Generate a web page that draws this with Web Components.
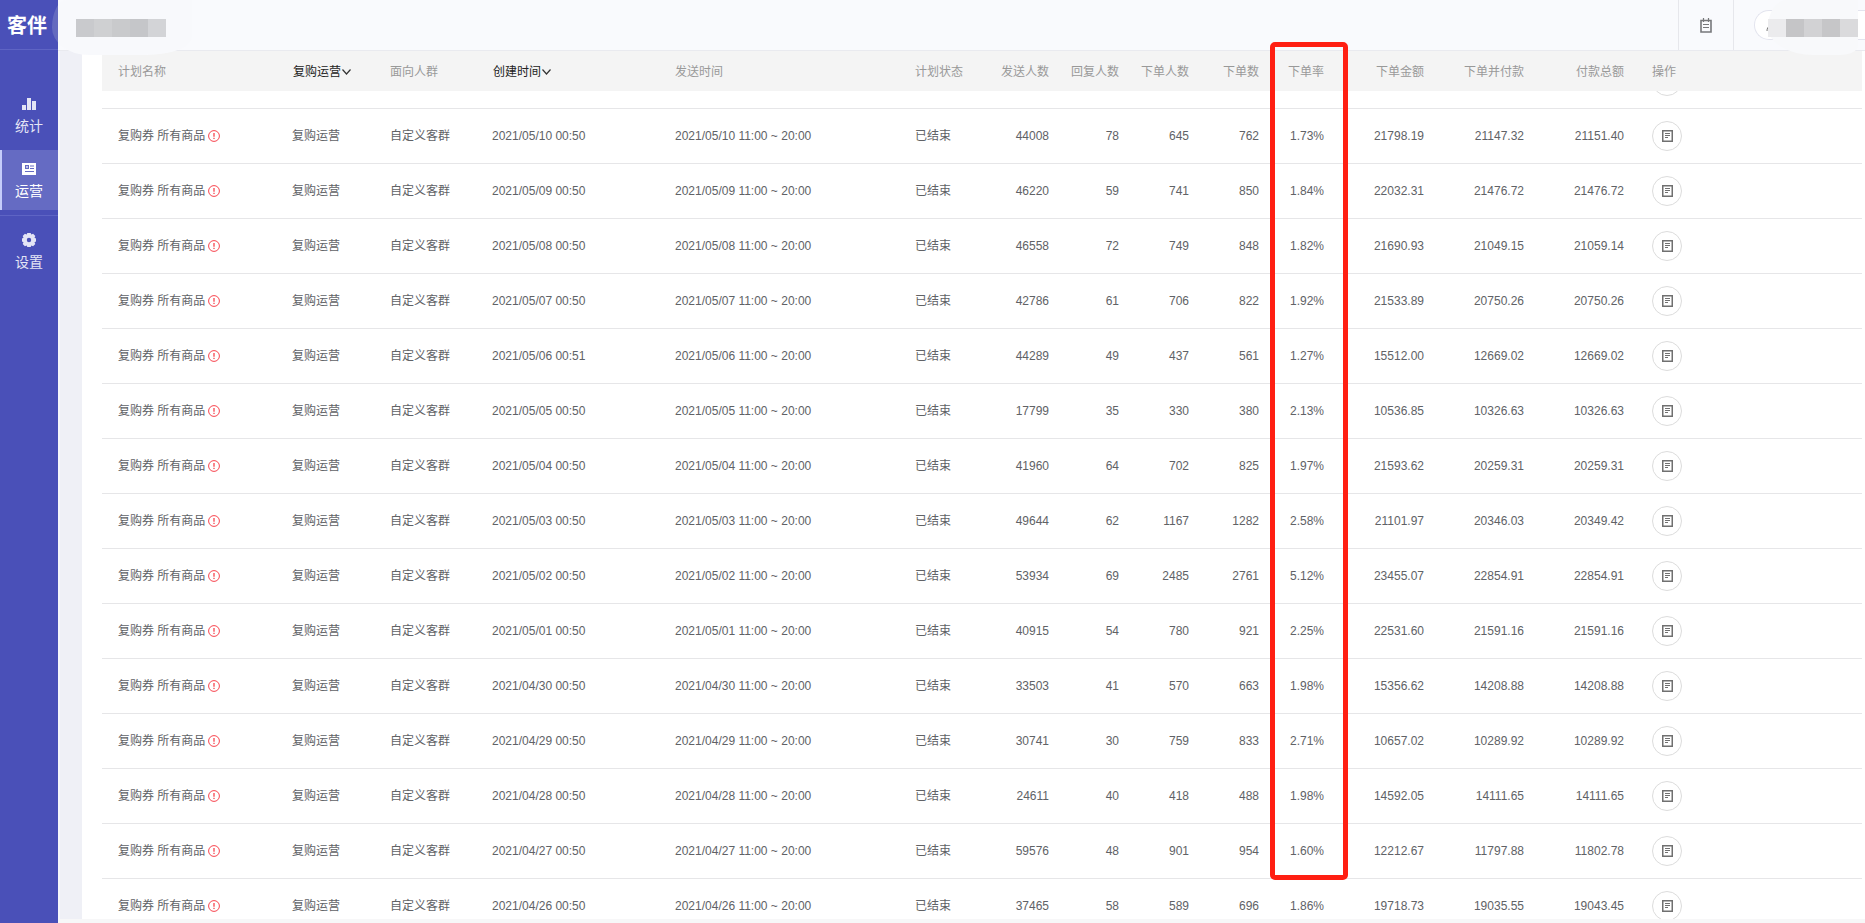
<!DOCTYPE html>
<html lang="zh-CN">
<head>
<meta charset="utf-8">
<title>客伴 - 运营</title>
<style>
html, body { height: 100%; margin: 0; }
body { font: 12px/16px "Liberation Sans", "Noto Sans CJK SC", sans-serif; color: #606266; background: #f7f7f8; overflow: hidden; }
</style>
</head>
<body>
<kb-app></kb-app>

<template id="t-app">
<style>
:host { display: grid; grid-template-columns: 58px minmax(0, 1fr); grid-template-rows: minmax(0, 1fr); height: 100vh; }
.right { display: grid; grid-template-rows: 51px minmax(0, 1fr); min-width: 0; padding-bottom: 4px; box-sizing: border-box; }
.body { position: relative; display: flex; min-height: 0; background: #fff; border-left: 2px solid #f6f7fb; }
.gutter { flex: none; width: 22px; background: #eff0f6; }
kb-plans { flex: 1; min-width: 0; margin: 0 3px 0 20px; }
</style>
<kb-sidebar>
  <kb-nav-item icon="chart">统计</kb-nav-item>
  <kb-nav-item icon="news" active>运营</kb-nav-item>
  <kb-nav-item icon="gear" divided>设置</kb-nav-item>
</kb-sidebar>
<div class="right">
  <kb-topbar></kb-topbar>
  <main class="body"><div class="gutter"></div><kb-plans></kb-plans></main>
</div>
</template>

<template id="t-sidebar">
<style>
:host { display: flex; flex-direction: column; background: #4a50b8; color: #fff; }
.logo { height: 47px; padding: 2px 4px 0 0; border-bottom: 1px solid #5e64c4; display: flex; align-items: center; justify-content: center; margin: 0; font-size: 20px; line-height: 24px; font-weight: 700; }
nav { display: flex; flex-direction: column; gap: 5px; padding-top: 35px; }
</style>
<h1 class="logo">客伴</h1>
<nav><slot></slot></nav>
</template>

<template id="t-nav-item">
<style>
:host { display: block; }
:host([divided]) { border-top: 1px solid #5e64c4; padding-top: 5px; }
a { display: flex; flex-direction: column; align-items: center; gap: 4px; height: 60px; padding-top: 11px; box-sizing: border-box; color: #e4e5f5; text-decoration: none; font-size: 14px; line-height: 20px; border-left: 2px solid transparent; border-right: 2px solid transparent; }
:host([active]) a { background: #656bc3; border-left-color: #c5cdfa; border-right-color: #656bc3; color: #fff; }
svg { display: block; flex: none; }
</style>
<a href="#"><svg width="16" height="16" viewBox="0 0 16 16" fill="currentColor" aria-hidden="true"></svg><span><slot></slot></span></a>
</template>

<template id="t-topbar">
<style>
:host { position: relative; z-index: 2; display: flex; justify-content: flex-end; background: #f9fafd; border-bottom: 1px solid #e9eaef; box-sizing: border-box; height: 51px; }
.tool { width: 55px; border: 0; border-left: 1px solid #e6e7ec; background: none; padding: 0; display: grid; place-items: center; box-sizing: border-box; color: #77787b; }
.user { width: 132px; border-left: 1px solid #e6e7ec; display: flex; align-items: center; padding-left: 20px; box-sizing: border-box; }
.avatar { flex: 1; height: 30px; border: 1px solid #e3e4ee; border-right: 0; border-radius: 15px 0 0 15px; background: #fff; box-sizing: border-box; display: flex; align-items: center; padding-left: 11px; }
.mask { position: absolute; top: 0; height: 55px; background: #f8f9fb; }
.mask.l { left: -6px; width: 140px; border-radius: 16px 0 50px 40px / 30px 0 20px 30px; background: linear-gradient(90deg, #646abf 6px, #f8f9fc 6px); }
.mask.r { right: 7px; width: 90px; border-radius: 20px 0 20px 50px / 30px 0 10px 30px; }
.px { position: absolute; top: 19px; height: 18px; display: flex; }
.px i { width: 18px; height: 18px; }
.l .px { left: 24px; }
.r .px { left: 0; }
</style>
<button class="tool" aria-label="任务"><svg width="12" height="15" viewBox="0 0 12 15" fill="none" stroke="currentColor" aria-hidden="true"><path d="M1 2.500h10v11.500H1z" stroke-width="1.600"/><path d="M3.500 0v4M8.500 0v4" stroke-width="1.200"/><path d="M3 6.500h6M3 9.500h6" stroke-width="1.200"/></svg></button>
<div class="user"><div class="avatar"><svg width="10" height="14" viewBox="0 0 10 14" fill="none" stroke="#777" aria-hidden="true"><path d="M1 13C1 10 2 9 4 8M4 8C2 5 3 2 6 2"/></svg></div></div>
<div class="mask l"><div class="px"><i style="background:#c9cacd"></i><i style="background:#cfd0d2"></i><i style="background:#c9cacc"></i><i style="background:#c5c6c9"></i><i style="background:#d3d4d7"></i></div></div>
<div class="mask r"><div class="px"><i style="background:#ebebed"></i><i style="background:#c5c5c7"></i><i style="background:#d2d2d4"></i><i style="background:#c6c6c8"></i><i style="background:#dadadc"></i></div></div>
</template>

<template id="t-plans">
<style>
:host { display: block; position: relative; }
.scroll { height: 100%; overflow-y: scroll; scrollbar-width: none; }
table { width: 100%; table-layout: fixed; border-collapse: separate; border-spacing: 0; }
th, td { box-sizing: border-box; padding: 0 0 0 16px; text-align: left; font-weight: 400; white-space: nowrap; }
th { position: sticky; top: 0; z-index: 1; height: 40px; background: #f4f4f4; color: #999; padding-top: 2px; }
td { height: 55px; border-bottom: 1px solid #e6e6e8; }
.n { text-align: right; padding-left: 0; padding-right: 12px; }
th button { all: unset; display: inline-flex; align-items: center; gap: 1px; margin-left: 1px; color: #222; cursor: pointer; }
.name { display: flex; align-items: center; gap: 3px; }
.mark { position: absolute; z-index: 3; top: -9px; left: 1168px; width: 78px; height: 838px; box-sizing: border-box; border: 5px solid #ff1f12; border-radius: 5px; pointer-events: none; }
.op { display: grid; place-items: center; width: 30px; height: 30px; padding: 0; border: 1px solid #dcdcdc; border-radius: 50%; background: #fff; color: #707070; }
svg { display: block; }
</style>
<div class="scroll"><table>
<colgroup><col style="width:174px"><col style="width:98px"><col style="width:102px"><col style="width:183px"><col style="width:240px"><col style="width:92px"><col style="width:70px"><col style="width:70px"><col style="width:70px"><col style="width:70px"><col style="width:65px"><col style="width:100px"><col style="width:100px"><col style="width:100px"><col></colgroup>
<thead><tr><th>计划名称</th><th><button>复购运营<svg width="9" height="8" viewBox="0 0 9 8" fill="none" stroke="#333" stroke-width="1.200"><path d="M.5 1.500L4.500 6L8.500 1.500"/></svg></button></th><th>面向人群</th><th><button>创建时间<svg width="9" height="8" viewBox="0 0 9 8" fill="none" stroke="#333" stroke-width="1.200"><path d="M.5 1.500L4.500 6L8.500 1.500"/></svg></button></th><th>发送时间</th><th>计划状态</th><th class="n">发送人数</th><th class="n">回复人数</th><th class="n">下单人数</th><th class="n">下单数</th><th class="n">下单率</th><th class="n">下单金额</th><th class="n">下单并付款</th><th class="n">付款总额</th><th>操作</th></tr></thead>
<tbody></tbody>
</table></div>
<div class="mark"></div>
</template>

<script>
class KbElement extends HTMLElement {
  constructor() {
    super();
    const tpl = document.getElementById('t-' + this.localName.slice(3));
    this.attachShadow({ mode: 'open' }).append(tpl.content.cloneNode(true));
  }
}

const NAV_ICONS = {
  chart: '<path d="M1 9h4v5H1zM6 2h4v12H6zM11 5h4v9h-4z"/>',
  news: '<path fill-rule="evenodd" d="M1 2h14v12H1zM4 4v4h4V4zM5.200 5.200h1.600v1.600H5.200zM9 4.500v1h4v-1zM9 7v1h4V7zM4 10v1h9v-1z"/>',
  gear: '<path fill-rule="evenodd" d="M6.300 1h3.400l.6 1.500 1.800-.7 2.200 2.200-.8 1.800 1.500.6v3.200l-1.500.6.8 1.800-2.200 2.200-1.800-.7-.6 1.500H6.300l-.6-1.500-1.800.7-2.200-2.200.8-1.800L1 9.600V6.400l1.500-.6L1.700 4l2.200-2.200 1.800.7zM8 5.800a2.200 2.200 0 1 0 0 4.400 2.200 2.200 0 0 0 0-4.400z"/>'
};

class KbNavItem extends KbElement {
  connectedCallback() {
    this.shadowRoot.querySelector('svg').innerHTML = NAV_ICONS[this.getAttribute('icon')];
  }
}

const PLANS = [
  ['05/10', '00:50', 44008, 78, 645, 762, '1.73%', '21798.19', '21147.32', '21151.40'],
  ['05/09', '00:50', 46220, 59, 741, 850, '1.84%', '22032.31', '21476.72', '21476.72'],
  ['05/08', '00:50', 46558, 72, 749, 848, '1.82%', '21690.93', '21049.15', '21059.14'],
  ['05/07', '00:50', 42786, 61, 706, 822, '1.92%', '21533.89', '20750.26', '20750.26'],
  ['05/06', '00:51', 44289, 49, 437, 561, '1.27%', '15512.00', '12669.02', '12669.02'],
  ['05/05', '00:50', 17799, 35, 330, 380, '2.13%', '10536.85', '10326.63', '10326.63'],
  ['05/04', '00:50', 41960, 64, 702, 825, '1.97%', '21593.62', '20259.31', '20259.31'],
  ['05/03', '00:50', 49644, 62, 1167, 1282, '2.58%', '21101.97', '20346.03', '20349.42'],
  ['05/02', '00:50', 53934, 69, 2485, 2761, '5.12%', '23455.07', '22854.91', '22854.91'],
  ['05/01', '00:50', 40915, 54, 780, 921, '2.25%', '22531.60', '21591.16', '21591.16'],
  ['04/30', '00:50', 33503, 41, 570, 663, '1.98%', '15356.62', '14208.88', '14208.88'],
  ['04/29', '00:50', 30741, 30, 759, 833, '2.71%', '10657.02', '10289.92', '10289.92'],
  ['04/28', '00:50', 24611, 40, 418, 488, '1.98%', '14592.05', '14111.65', '14111.65'],
  ['04/27', '00:50', 59576, 48, 901, 954, '1.60%', '12212.67', '11797.88', '11802.78'],
  ['04/26', '00:50', 37465, 58, 589, 696, '1.86%', '19718.73', '19035.55', '19043.45']
];

const ALERT = '<svg width="12" height="12" viewBox="0 0 12 12" fill="none" stroke="#f7444e" aria-hidden="true"><circle cx="6" cy="6" r="5.400"/><path d="M6 3v3.800M6 7.800v1.200" stroke-width="1.300"/></svg>';
const DETAIL = '<button class="op" aria-label="详情"><svg width="11" height="12" viewBox="0 0 11 12" fill="none" stroke="currentColor" aria-hidden="true"><path d="M.75.75h9.500v10.500H.75z" stroke-width="1.500"/><path d="M3 3.500h5M3 5.500h5M3 7.500h3" /></svg></button>';

class KbPlans extends KbElement {
  connectedCallback() {
    const row = ([day, at, ...nums]) => `<tr><td><span class="name">复购券 所有商品${ALERT}</span></td><td>复购运营</td><td>自定义客群</td><td>2021/${day} ${at}</td><td>2021/${day} 11:00 ~ 20:00</td><td>已结束</td>${nums.map(n => `<td class="n">${n}</td>`).join('')}<td>${DETAIL}</td></tr>`;
    const leading = `<tr>${'<td></td>'.repeat(14)}<td>${DETAIL}</td></tr>`;
    this.shadowRoot.querySelector('tbody').innerHTML = leading + PLANS.map(row).join('');
  }
  scrollRows(offset) {
    this.shadowRoot.querySelector('.scroll').scrollTop = offset;
  }
}

customElements.define('kb-nav-item', KbNavItem);
customElements.define('kb-sidebar', class extends KbElement {});
customElements.define('kb-topbar', class extends KbElement {});
customElements.define('kb-plans', KbPlans);
customElements.define('kb-app', class extends KbElement {
  connectedCallback() {
    this.shadowRoot.querySelector('kb-plans').scrollRows(37);
  }
});
</script>
</body>
</html>
